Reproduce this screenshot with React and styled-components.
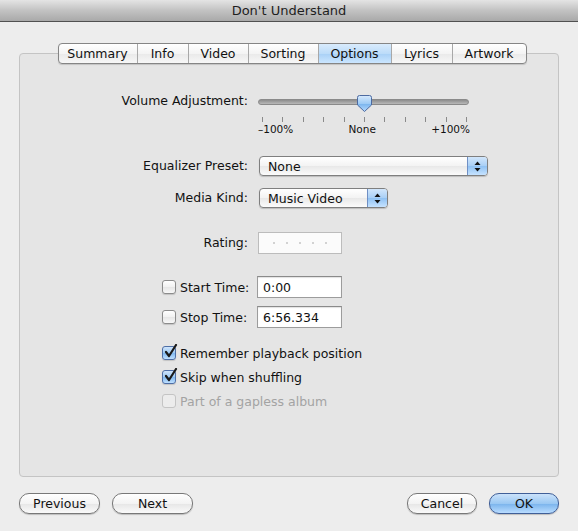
import styled, { createGlobalStyle, css } from "styled-components"

const GlobalStyle = createGlobalStyle`
    html, body {
        margin: 0;
        padding: 0;
        background: #ededed;
    }
    body {
        font-family: "DejaVu Sans", "Liberation Sans", sans-serif;
        font-size: 12.5px;
        color: #111;
    }
`

const Window = styled.div`
    width: 578px;
    height: 531px;
    display: flex;
    flex-direction: column;
    background: #ededed;
    overflow: hidden;
`

const TitleBar = styled.div`
    height: 21px;
    flex-shrink: 0;
    display: flex;
    align-items: center;
    justify-content: center;
    background: linear-gradient(#e4e4e4, #c2c2c2 50%, #a9a9a9);
    border-bottom: 1px solid #515151;
    font-size: 13px;
    color: #1e1e1e;
`

const Body = styled.div`
    display: flex;
    flex-direction: column;
    padding: 31px 19px 0;
`

const Panel = styled.div`
    height: 422px;
    display: flex;
    flex-direction: column;
    background: #e5e5e5;
    border: 1px solid #c4c4c4;
    border-radius: 4px;
`

const TabBar = styled.div`
    align-self: center;
    margin: -11px 0 0 6px;
    display: flex;
    height: 19px;
    border: 1px solid #858585;
    border-radius: 4px;
    overflow: hidden;
    background: linear-gradient(#ffffff, #f4f4f4 50%, #e9e9e9 51%, #f7f7f7);
    box-shadow: 0 1px 1px rgba(0, 0, 0, 0.15);
`

const Tab = styled.div`
    width: ${p => p.$w}px;
    display: flex;
    align-items: center;
    justify-content: center;
    color: #111;
    & + & {
        border-left: 1px solid #a8a8a8;
    }
    ${p => p.$active && css`
        background: linear-gradient(#d9ebfc, #bcdcf9 50%, #a8d0f6 51%, #cbe6ff);
    `}
`

const Row = styled.div`
    display: flex;
    align-items: ${p => p.$align || "center"};
    margin-top: ${p => p.$top}px;
`

const Label = styled.div`
    width: 228px;
    margin-right: ${p => p.$gap ?? 11}px;
    text-align: right;
    line-height: 16px;
    white-space: nowrap;
`

const SliderBlock = styled.div`
    width: 212px;
    display: flex;
    flex-direction: column;
`

const TrackArea = styled.div`
    position: relative;
    height: 18px;
    display: flex;
    align-items: center;
`

const Track = styled.div`
    width: 209px;
    height: 4px;
    border-radius: 3px;
    background: linear-gradient(#8d8d8d, #b9b9b9);
    border: 1px solid #8a8a8a;
    box-sizing: content-box;
`

const Knob = styled.svg`
    position: absolute;
    left: 99px;
    top: 2px;
`

const Ticks = styled.div`
    display: flex;
    justify-content: space-between;
    padding: 0 3px 0 4px;
    margin-top: 6px;
    height: 5px;
`

const Tick = styled.div`
    width: 1px;
    height: 5px;
    background: #8a8a8a;
`

const ScaleLabels = styled.div`
    display: flex;
    justify-content: space-between;
    font-size: 10.5px;
    line-height: 12px;
    margin-top: 1px;
`

const Popup = styled.div`
    width: ${p => p.$w}px;
    height: 18px;
    display: flex;
    border: 1px solid #7f7f7f;
    border-radius: 4px;
    overflow: hidden;
    background: linear-gradient(#ffffff, #f3f3f3 50%, #e8e8e8 51%, #fbfbfb);
    box-shadow: 0 1px 1px rgba(0, 0, 0, 0.18);
`

const PopupText = styled.div`
    flex: 1;
    padding-left: 8px;
    display: flex;
    align-items: center;
`

const Stepper = styled.div`
    width: 19px;
    border-left: 1px solid #6f8fc4;
    background: linear-gradient(#d2e6fb, #a8cff6 50%, #8fc1f3 51%, #c6e3ff);
    display: flex;
    align-items: center;
    justify-content: center;
`

const RatingBox = styled.div`
    width: 84px;
    height: 22px;
    box-sizing: border-box;
    border: 1px solid #bcbcbc;
    background: #fbfbfb;
    display: flex;
    align-items: center;
    justify-content: center;
    gap: 11px;
    margin-left: -1px;
`

const Dot = styled.div`
    width: 2px;
    height: 2px;
    border-radius: 1px;
    background: #c4c4c4;
`

const TextField = styled.div`
    width: 85px;
    height: 22px;
    box-sizing: border-box;
    padding-left: 5px;
    border: 1px solid #9c9c9c;
    border-top-color: #8a8a8a;
    background: #ffffff;
    box-shadow: inset 0 1px 1px rgba(0, 0, 0, 0.12);
    display: flex;
    align-items: center;
`

const CheckRow = styled.div`
    display: flex;
    align-items: center;
    margin: ${p => p.$top}px 0 0 142px;
    min-height: 18px;
    color: ${p => p.$disabled ? "#a3a3a3" : "#111"};
`

const CheckText = styled.span`
    margin-left: 4px;
    width: ${p => p.$w ? `${p.$w}px` : "auto"};
    white-space: nowrap;
`

const Box = styled.div`
    position: relative;
    width: 12px;
    height: 12px;
    border-radius: 3px;
    border: 1px solid ${p => p.$checked ? "#4f6fa6" : p.$disabled ? "#c4c4c4" : "#8c8c8c"};
    background: ${p => p.$checked
        ? "linear-gradient(#cfe4fb, #9ccaf5 50%, #7fb7ef 51%, #bfe0ff)"
        : p.$disabled ? "#ececec" : "linear-gradient(#ffffff, #f1f1f1 50%, #e6e6e6 51%, #f8f8f8)"};
    box-shadow: ${p => p.$disabled ? "none" : "0 1px 1px rgba(0, 0, 0, 0.15)"};
    box-sizing: content-box;
    flex-shrink: 0;
`

const CheckMark = styled.svg`
    position: absolute;
    left: 1px;
    top: -3px;
`

const Footer = styled.div`
    display: flex;
    align-items: center;
    padding: 16px 19px 0;
    gap: 12px;
`

const Spacer = styled.div`
    flex: 1;
`

const Button = styled.div`
    width: ${p => p.$w}px;
    height: 19px;
    border-radius: 10px;
    border: 1px solid ${p => p.$primary ? "#405f98" : "#787878"};
    background: ${p => p.$primary
        ? "linear-gradient(#cbe2fa, #9ac8f3 50%, #79b3ec 51%, #b9dcff)"
        : "linear-gradient(#ffffff, #f3f3f3 50%, #e6e6e6 51%, #fafafa)"};
    box-shadow: 0 1px 1px rgba(0, 0, 0, 0.2);
    display: flex;
    align-items: center;
    justify-content: center;
    color: #111;
`

const tabs = [
    { name: "Summary", w: 78 },
    { name: "Info", w: 50 },
    { name: "Video", w: 59 },
    { name: "Sorting", w: 69 },
    { name: "Options", w: 72 },
    { name: "Lyrics", w: 60 },
    { name: "Artwork", w: 73 },
]

const Arrows = () => (
    <svg width="7" height="11" viewBox="0 0 7 11">
        <path d="M3.5 0.5 L6.5 4 L0.5 4 Z" fill="#111" />
        <path d="M3.5 10.5 L6.5 7 L0.5 7 Z" fill="#111" />
    </svg>
)

const Checkbox = ({ checked, disabled }) => (
    <Box $checked={checked} $disabled={disabled}>
        {checked &&
            <CheckMark width="14" height="15" viewBox="0 0 14 15">
                <path d="M2 8 L5 12 L12 1" fill="none" stroke="#1a1a1a" strokeWidth="2.2" strokeLinecap="round" strokeLinejoin="round" />
            </CheckMark>
        }
    </Box>
)

const Slider = () => (
    <SliderBlock>
        <TrackArea>
            <Track />
            <Knob width="15" height="17" viewBox="0 0 15 17">
                <defs>
                    <linearGradient id="knob" x1="0" y1="0" x2="0" y2="1">
                        <stop offset="0" stopColor="#d7e9fc" />
                        <stop offset="0.5" stopColor="#9ecbf5" />
                        <stop offset="0.55" stopColor="#7db6ee" />
                        <stop offset="1" stopColor="#b7dbff" />
                    </linearGradient>
                </defs>
                <path d="M2.5 0.5 H12.5 Q14.5 0.5 14.5 2.5 V10 L7.5 16.5 L0.5 10 V2.5 Q0.5 0.5 2.5 0.5 Z" fill="url(#knob)" stroke="#4d6aa0" />
            </Knob>
        </TrackArea>
        <Ticks>
            {Array.from({ length: 11 }).map((_, i) => <Tick key={i} />)}
        </Ticks>
        <ScaleLabels>
            <span>–100%</span>
            <span>None</span>
            <span>+100%</span>
        </ScaleLabels>
    </SliderBlock>
)

const App = () => {
    return (
        <Window>
            <GlobalStyle />
            <TitleBar>Don't Understand</TitleBar>
            <Body>
                <Panel>
                    <TabBar>
                        {tabs.map(tab =>
                            <Tab key={tab.name} $w={tab.w} $active={tab.name === "Options"}>{tab.name}</Tab>
                        )}
                    </TabBar>

                    <Row $top={29} $align="flex-start">
                        <Label $gap={10}>Volume Adjustment:</Label>
                        <Slider />
                    </Row>

                    <Row $top={21}>
                        <Label>Equalizer Preset:</Label>
                        <Popup $w={227}>
                            <PopupText>None</PopupText>
                            <Stepper><Arrows /></Stepper>
                        </Popup>
                    </Row>

                    <Row $top={12}>
                        <Label>Media Kind:</Label>
                        <Popup $w={127}>
                            <PopupText>Music Video</PopupText>
                            <Stepper><Arrows /></Stepper>
                        </Popup>
                    </Row>

                    <Row $top={24}>
                        <Label>Rating:</Label>
                        <RatingBox>
                            {Array.from({ length: 5 }).map((_, i) => <Dot key={i} />)}
                        </RatingBox>
                    </Row>

                    <CheckRow $top={22}>
                        <Checkbox />
                        <CheckText $w={77}>Start Time:</CheckText>
                        <TextField>0:00</TextField>
                    </CheckRow>

                    <CheckRow $top={8}>
                        <Checkbox />
                        <CheckText $w={77}>Stop Time:</CheckText>
                        <TextField>6:56.334</TextField>
                    </CheckRow>

                    <CheckRow $top={16}>
                        <Checkbox checked />
                        <CheckText>Remember playback position</CheckText>
                    </CheckRow>
                    <CheckRow $top={6}>
                        <Checkbox checked />
                        <CheckText>Skip when shuffling</CheckText>
                    </CheckRow>
                    <CheckRow $top={6} $disabled>
                        <Checkbox disabled />
                        <CheckText>Part of a gapless album</CheckText>
                    </CheckRow>
                </Panel>
            </Body>
            <Footer>
                <Button $w={79}>Previous</Button>
                <Button $w={79}>Next</Button>
                <Spacer />
                <Button $w={68}>Cancel</Button>
                <Button $w={68} $primary>OK</Button>
            </Footer>
        </Window>
    )
}

export default App
